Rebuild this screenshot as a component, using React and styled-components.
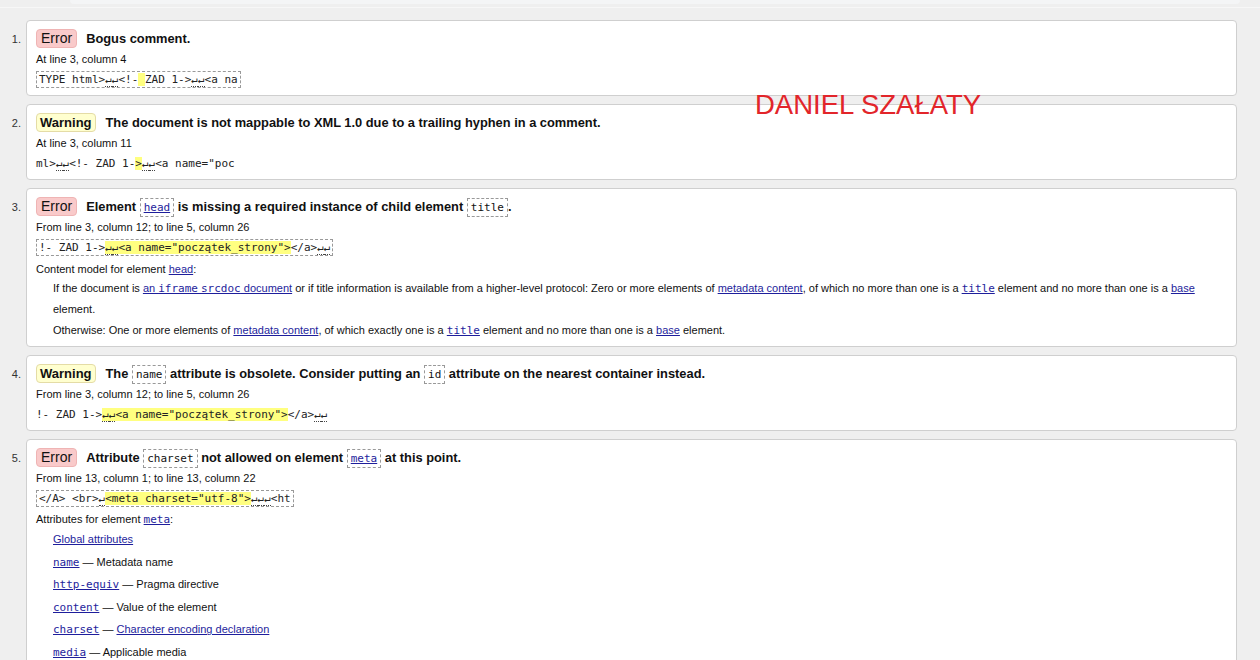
import React from 'react';
import styled, { createGlobalStyle } from 'styled-components';

const GlobalStyle = createGlobalStyle`
  html, body {
    margin: 0;
    background: #efefef;
  }
  body {
    font-family: "Liberation Sans", Arial, sans-serif;
    color: #111;
  }
`;

const Page = styled.div`
  position: relative;
  height: 660px;
  overflow: hidden;
`;

const TopStrip = styled.div`
  height: 8px;
  border-bottom: 1px solid #f7f7f7;
  box-sizing: border-box;

  .tab {
    height: 4px;
    margin: 0 20px 0 70px;
    background: #f4f5f6;
    border-radius: 0 0 8px 8px;
  }
`;

const Messages = styled.ol`
  list-style: none;
  margin: 12px 23px 0 0;
  padding: 0;
  display: flex;
  flex-direction: column;
  gap: 8px;
`;

const Message = styled.li`
  display: flex;
`;

const Num = styled.span`
  flex: 0 0 26px;
  box-sizing: border-box;
  padding: 12px 5px 0 0;
  text-align: right;
  font-size: 11px;
  line-height: 14px;
  color: #333;
`;

const Card = styled.div`
  flex: 1;
  min-width: 0;
  background: #fff;
  border: 1px solid #cfcfcf;
  border-radius: 4px;
  padding: 6px 10px 3px 9px;
`;

const TitleRow = styled.div`
  display: flex;
  align-items: center;
  height: 22px;
  font-size: 12.85px;
  font-weight: bold;
  white-space: pre;
`;

const Badge = styled.span`
  display: inline-block;
  line-height: 17px;
  border-radius: 4px;
  margin-right: ${(p) => (p.$kind === 'error' ? '9px' : '10px')};
  border: 1px solid ${(p) => (p.$kind === 'error' ? '#efb4b4' : '#e4dca6')};
  background: ${(p) => (p.$kind === 'error' ? '#f9caca' : '#ffffcf')};
  padding: 0 ${(p) => (p.$kind === 'error' ? '4px' : '3px')};
  font-size: ${(p) => (p.$kind === 'error' ? '14px' : '13px')};
  font-weight: ${(p) => (p.$kind === 'error' ? 'normal' : 'bold')};
  color: #111;
`;

const InlineCode = styled.code`
  font-family: "DejaVu Sans Mono", "Liberation Mono", monospace;
  font-size: 11px;
  font-weight: normal;
  border: 1px dashed #999;
  padding: 2px 3px;
`;

const Location = styled.p`
  margin: 0;
  font-size: 11px;
  line-height: 20px;
`;

const Extract = styled.div`
  width: fit-content;
  margin: 2px 0 4px;
  padding: 0 ${(p) => (p.$boxed ? '2px' : '0')};
  line-height: 15px;
  font-family: "DejaVu Sans Mono", "Liberation Mono", monospace;
  font-size: 11px;
  color: #222;
  white-space: pre;
  border: 1px dashed #999;
  border-color: ${(p) => (p.$boxed ? '#999' : 'transparent')};
  border-left-width: ${(p) => (p.$boxed ? '1px' : '0')};
`;

const Lb = styled.span`
  border-bottom: 1px dotted #444;
`;

const Hl = styled.mark`
  background: #ffff80;
  color: inherit;
`;

const Sub = styled.p`
  margin: 0;
  font-size: 11px;
  line-height: ${(p) => p.$lh || '18px'};
`;

const Indented = styled.div`
  padding-left: 17px;
  font-size: 11px;
  line-height: 21px;
  margin-bottom: 2px;

  p {
    margin: 0;
  }
`;

const AttrList = styled.ul`
  list-style: none;
  margin: 0;
  padding-left: 17px;
  font-size: 11px;

  li {
    height: 22.6px;
    line-height: 22.6px;
  }
`;

const Link = styled.a`
  color: #1e1e9c;
  text-decoration: underline;
  font-family: ${(p) =>
    p.$mono ? '"DejaVu Sans Mono", "Liberation Mono", monospace' : 'inherit'};
  font-weight: normal;
`;

const Signature = styled.div`
  position: absolute;
  left: 755px;
  top: 89px;
  font-size: 27.5px;
  color: #e2252a;
  font-family: "Liberation Sans", Arial, sans-serif;
`;

const L = () => <Lb>↵</Lb>;

const App = () => {
  return (
    <Page>
      <GlobalStyle />
      <TopStrip>
        <div className="tab" />
      </TopStrip>
      <Messages>
        <Message>
          <Num>1.</Num>
          <Card>
            <TitleRow>
              <Badge $kind="error">Error</Badge>
              <span>Bogus comment.</span>
            </TitleRow>
            <Location>At line 3, column 4</Location>
            <Extract $boxed>
              TYPE html&gt;<L /><L />&lt;!-<Hl> </Hl>ZAD 1-&gt;<L /><L />&lt;a na
            </Extract>
          </Card>
        </Message>

        <Message>
          <Num>2.</Num>
          <Card>
            <TitleRow>
              <Badge $kind="warning">Warning</Badge>
              <span>The document is not mappable to XML 1.0 due to a trailing hyphen in a comment.</span>
            </TitleRow>
            <Location>At line 3, column 11</Location>
            <Extract>
              ml&gt;<L /><L />&lt;!- ZAD 1-<Hl>&gt;</Hl><L /><L />&lt;a name="poc
            </Extract>
          </Card>
        </Message>

        <Message>
          <Num>3.</Num>
          <Card>
            <TitleRow>
              <Badge $kind="error">Error</Badge>
              <span>
                {'Element '}
                <InlineCode>
                  <Link $mono href="#">head</Link>
                </InlineCode>
                {' is missing a required instance of child element '}
                <InlineCode>title</InlineCode>.
              </span>
            </TitleRow>
            <Location>From line 3, column 12; to line 5, column 26</Location>
            <Extract $boxed>
              !- ZAD 1-&gt;
              <Hl>
                <L /><L />&lt;a name="początek_strony"&gt;
              </Hl>
              &lt;/a&gt;<L /><L />
            </Extract>
            <Sub>
              Content model for element <Link href="#">head</Link>:
            </Sub>
            <Indented>
              <p>
                If the document is <Link href="#">an <Link as="span" $mono>iframe</Link> <Link as="span" $mono>srcdoc</Link> document</Link> or
                if title information is available from a higher-level protocol: Zero or more elements
                of <Link href="#">metadata content</Link>, of which no more than one is
                a <Link $mono href="#">title</Link> element and no more than one is
                a <Link href="#">base</Link> element.
              </p>
              <p>
                Otherwise: One or more elements of <Link href="#">metadata content</Link>, of which
                exactly one is a <Link $mono href="#">title</Link> element and no more than one is
                a <Link href="#">base</Link> element.
              </p>
            </Indented>
          </Card>
        </Message>

        <Message>
          <Num>4.</Num>
          <Card>
            <TitleRow>
              <Badge $kind="warning">Warning</Badge>
              <span>
                {'The '}
                <InlineCode>name</InlineCode>
                {' attribute is obsolete. Consider putting an '}
                <InlineCode>id</InlineCode>
                {' attribute on the nearest container instead.'}
              </span>
            </TitleRow>
            <Location>From line 3, column 12; to line 5, column 26</Location>
            <Extract>
              !- ZAD 1-&gt;
              <Hl>
                <L /><L />&lt;a name="początek_strony"&gt;
              </Hl>
              &lt;/a&gt;<L /><L />
            </Extract>
          </Card>
        </Message>

        <Message>
          <Num>5.</Num>
          <Card>
            <TitleRow>
              <Badge $kind="error">Error</Badge>
              <span>
                {'Attribute '}
                <InlineCode>charset</InlineCode>
                {' not allowed on element '}
                <InlineCode>
                  <Link $mono href="#">meta</Link>
                </InlineCode>
                {' at this point.'}
              </span>
            </TitleRow>
            <Location>From line 13, column 1; to line 13, column 22</Location>
            <Extract $boxed>
              &lt;/A&gt; &lt;br&gt;<L />
              <Hl>&lt;meta charset="utf-8"&gt;</Hl>
              <L /><L /><L />&lt;ht
            </Extract>
            <Sub $lh="16px">
              Attributes for element <Link $mono href="#">meta</Link>:
            </Sub>
            <AttrList>
              <li>
                <Link href="#">Global attributes</Link>
              </li>
              <li>
                <Link $mono href="#">name</Link> — Metadata name
              </li>
              <li>
                <Link $mono href="#">http-equiv</Link> — Pragma directive
              </li>
              <li>
                <Link $mono href="#">content</Link> — Value of the element
              </li>
              <li>
                <Link $mono href="#">charset</Link> — <Link href="#">Character encoding declaration</Link>
              </li>
              <li>
                <Link $mono href="#">media</Link> — Applicable media
              </li>
            </AttrList>
          </Card>
        </Message>
      </Messages>
      <Signature>DANIEL SZAŁATY</Signature>
    </Page>
  );
};

export default App;
